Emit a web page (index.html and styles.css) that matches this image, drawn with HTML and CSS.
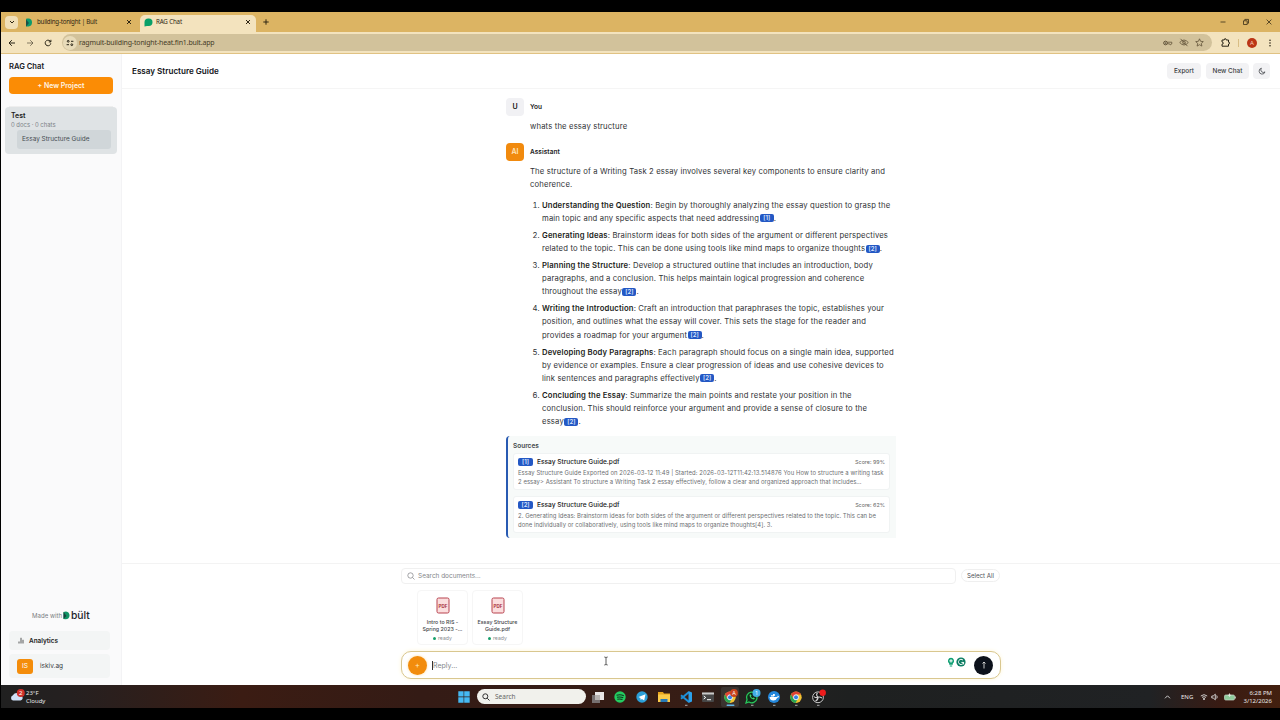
FILE: index.html
```html
<!DOCTYPE html>
<html lang="en">
<head>
<meta charset="utf-8">
<title>RAG Chat</title>
<link rel="stylesheet" href="styles.css">
</head>
<body>
<div class="screen">
  <div class="tabstrip">
    <div class="tab-menu"><svg width="6" height="6" viewBox="0 0 6 6"><path d="M1 2l2 2 2-2" class="ln"/></svg></div>
    <div class="tab">
      <svg class="fav" width="9" height="9" viewBox="0 0 9 9"><path d="M1 1.500Q1 .5 2 .5h2Q7 1 7 4.500T3.500 8.500H1z" fill="#0c9a6c"/><path d="M1 1.500V8.500L4 5z" fill="#1b5049"/></svg>
      <span class="tab-title t1">building-tonight | Bult</span>
      <svg class="x" width="6" height="6" viewBox="0 0 6 6"><path d="M1 1l4 4M5 1l-4 4" class="ln"/></svg>
    </div>
    <div class="tab active">
      <svg class="fav" width="9" height="9" viewBox="0 0 9 9"><path d="M.5 8.500V4A3.700 3.700 0 0 1 4.200.5h.6a3.700 3.700 0 0 1 0 7.400H3z" fill="#08a068"/></svg>
      <span class="tab-title t2">RAG Chat</span>
      <svg class="x" width="6" height="6" viewBox="0 0 6 6"><path d="M1 1l4 4M5 1l-4 4" class="ln"/></svg>
    </div>
    <svg class="plus" width="6" height="6" viewBox="0 0 6 6"><path d="M3 .3v5.400M.3 3h5.400" class="ln"/></svg>
    <div class="winctl">
      <svg width="8" height="8" viewBox="0 0 8 8"><path d="M1.500 4h5" class="ln thin"/></svg>
      <svg width="8" height="8" viewBox="0 0 8 8"><path d="M1.500 2.800h3.700v3.700H1.500zM2.800 2.600V1.400h3.700v3.800H5.400" class="ln thin"/></svg>
      <svg width="8" height="8" viewBox="0 0 8 8"><path d="M1.600 1.600l4.800 4.800M6.400 1.600L1.600 6.400" class="ln thin"/></svg>
    </div>
  </div>
  <div class="toolbar">
    <div class="nav">
      <svg width="8" height="8" viewBox="0 0 8 8"><path d="M7 4H1.200M3.800 1.200L1 4l2.800 2.800" class="ln"/></svg>
      <svg width="8" height="8" viewBox="0 0 8 8"><path d="M1 4h5.800M4.200 1.200L7 4 4.200 6.800" class="ln faded"/></svg>
      <svg width="8" height="8" viewBox="0 0 8 8"><path d="M6.800 4.300A2.800 2.800 0 1 1 6 2l.8.8M6.900.8v2.100H4.800" class="ln"/></svg>
    </div>
    <div class="omnibox">
      <span class="site"><svg width="8" height="8" viewBox="0 0 8 8"><path d="M5 2.300h2.400M.6 5.700h2.400" class="ln"/><circle cx="2.200" cy="2.300" r=".9" class="ln"/><circle cx="5.800" cy="5.700" r=".9" class="ln"/></svg></span>
      <span class="url">ragmult-building-tonight-heat.fin1.bult.app</span>
      <div class="omni-icons">
        <svg width="10" height="8" viewBox="0 0 10 8"><circle cx="2.500" cy="4" r="1.800" class="ln"/><circle cx="2.500" cy="4" r=".5"/><path d="M4.300 3.200h4.500v1.600h-.5a.9.9 0 0 1-1.800 0H4.200" class="ln thin"/></svg>
        <svg width="10" height="9" viewBox="0 0 10 9"><path d="M.7 4.500Q5-.5 9.300 4.500Q5 9.500.7 4.500zM1.500.8l7 7.400" class="ln thin"/><circle cx="5" cy="4.500" r="1.400" class="ln thin"/></svg>
        <svg width="9" height="9" viewBox="0 0 9 9"><path d="M4.500.8l1.100 2.500 2.700.3-2 1.800.6 2.700-2.400-1.400-2.400 1.400.6-2.700-2-1.800 2.700-.3z" class="ln thin"/></svg>
      </div>
    </div>
    <svg class="ext" width="9" height="9" viewBox="0 0 9 9"><path d="M1 2h2.200q0-1.400 1-1.400T5.200 2h2.300v2.200q1.200 0 1.200.9t-1.200.9v2.200H1V6.200q1.300 0 1.300-1.100T1 4z" class="ln"/></svg>
    <i class="sep"></i>
    <span class="profile">A</span>
    <svg class="dots" width="4" height="8" viewBox="0 0 4 8"><circle cx="2" cy="1.200" r=".8"/><circle cx="2" cy="4" r=".8"/><circle cx="2" cy="6.800" r=".8"/></svg>
  </div>

  <div class="app">
    <aside class="sidebar">
      <div class="brand">RAG Chat</div>
      <div class="new-project">+ New Project</div>
      <div class="project">
        <div class="project-name">Test</div>
        <div class="project-meta">0 docs · 0 chats</div>
        <div class="project-chat">Essay Structure Guide</div>
      </div>
      <div class="made">Made with
        <svg width="7" height="9" viewBox="0 0 7 9"><path d="M.5 1l2.500-.5Q6.500 1 6.500 4.500T2.500 8.300L.5 8z" fill="#109466"/><path d="M.5 1v7L3.500 5z" fill="#17443f"/></svg>
        <b>bült</b></div>
      <div class="analytics"><svg width="6" height="7" viewBox="0 0 6 7"><path d="M1 4.500v2M3 .8v5.700M5 2.800v3.700" class="ln thin"/></svg>Analytics</div>
      <div class="user"><span>IS</span>iskiv.ag</div>
    </aside>

    <main class="main">
      <header class="header">
        <h1>Essay Structure Guide</h1>
        <div class="btn export">Export</div>
        <div class="btn newchat">New Chat</div>
        <div class="btn moon"><svg width="8" height="8" viewBox="0 0 8 8"><path d="M3.400 1.200A3 3 0 1 0 7 4.900 2.600 2.600 0 0 1 3.400 1.200z" class="ln thin"/></svg></div>
      </header>

      <section class="chat">
        <div class="msg">
          <span class="avatar you">U</span>
          <div class="body"><div class="who">You</div><p class="first">whats the essay structure</p></div>
        </div>
        <div class="msg ai">
          <span class="avatar bot">AI</span>
          <div class="body">
            <div class="who">Assistant</div>
            <p>The structure of a Writing Task 2 essay involves several key components to ensure clarity and<br>coherence.</p>
            <ol>
              <li><b>Understanding the Question</b>: Begin by thoroughly analyzing the essay question to grasp the<br>main topic and any specific aspects that need addressing<a>[1]</a>.</li>
              <li><b>Generating Ideas</b>: Brainstorm ideas for both sides of the argument or different perspectives<br>related to the topic. This can be done using tools like mind maps to organize thoughts<a>[2]</a>.</li>
              <li><b>Planning the Structure</b>: Develop a structured outline that includes an introduction, body<br>paragraphs, and a conclusion. This helps maintain logical progression and coherence<br>throughout the essay<a>[2]</a>.</li>
              <li><b>Writing the Introduction</b>: Craft an introduction that paraphrases the topic, establishes your<br>position, and outlines what the essay will cover. This sets the stage for the reader and<br>provides a roadmap for your argument<a>[2]</a>.</li>
              <li><b>Developing Body Paragraphs</b>: Each paragraph should focus on a single main idea, supported<br>by evidence or examples. Ensure a clear progression of ideas and use cohesive devices to<br>link sentences and paragraphs effectively<a>[2]</a>.</li>
              <li><b>Concluding the Essay</b>: Summarize the main points and restate your position in the<br>conclusion. This should reinforce your argument and provide a sense of closure to the<br>essay<a>[2]</a>.</li>
            </ol>
          </div>
        </div>
        <div class="sources">
          <div class="sources-title">Sources</div>
          <div class="source">
            <div class="source-head"><a>[1]</a><span>Essay Structure Guide.pdf</span><em>Score: 99%</em></div>
            <div class="snippet">Essay Structure Guide Exported on 2026-03-12 11:49 | Started: 2026-03-12T11:42:13.514876 You How to structure a writing task<br>2 essay&gt; Assistant To structure a Writing Task 2 essay effectively, follow a clear and organized approach that includes...</div>
          </div>
          <div class="source">
            <div class="source-head"><a>[2]</a><span>Essay Structure Guide.pdf</span><em>Score: 62%</em></div>
            <div class="snippet second">2. Generating Ideas: Brainstorm ideas for both sides of the argument or different perspectives related to the topic. This can be<br>done individually or collaboratively, using tools like mind maps to organize thoughts[4]. 3.</div>
          </div>
        </div>
      </section>

      <footer class="dock">
        <div class="column">
          <div class="search-row">
            <div class="doc-search"><svg width="8" height="8" viewBox="0 0 8 8"><circle cx="3.500" cy="3.500" r="2.700" class="ln thin"/><path d="M5.500 5.500l2 2" class="ln thin"/></svg>Search documents...</div>
            <div class="select-all">Select All</div>
          </div>
          <div class="docs">
            <div class="doc"><svg width="14" height="17" viewBox="0 0 14 17"><rect x="1" y="1" width="12" height="15" rx="1.500" fill="#fbdede" stroke="#b8434f"/><text x="7" y="11" text-anchor="middle" class="pdf">PDF</text></svg><span>Intro to RIS -<br>Spring 2023 -...</span><small><i></i>ready</small></div>
            <div class="doc"><svg width="14" height="17" viewBox="0 0 14 17"><rect x="1" y="1" width="12" height="15" rx="1.500" fill="#fbdede" stroke="#b8434f"/><text x="7" y="11" text-anchor="middle" class="pdf">PDF</text></svg><span>Essay Structure<br>Guide.pdf</span><small><i></i>ready</small></div>
          </div>
          <div class="composer">
            <div class="attach">+</div>
            <i class="caret"></i>
            <span class="placeholder">Reply...</span>
            <div class="grammar">
              <svg width="8" height="10" viewBox="0 0 8 10"><path d="M4 .8a3.100 3.100 0 0 0-1.800 5.600v1.400h3.600V6.400A3.100 3.100 0 0 0 4 .8z" fill="#0d9f72"/><path d="M4 2.200v3.400M2.300 3.900h3.400" stroke="#fff"/><path d="M2.800 9h2.400" stroke="#0d9f72"/></svg>
              <svg width="10" height="10" viewBox="0 0 10 10"><circle cx="5" cy="5" r="4.600" fill="#0b7c62"/><path d="M7 3.200A2.600 2.600 0 1 0 7.600 5.400H5.400M7.600 5.400v2" fill="none" stroke="#fff" stroke-width="1"/></svg>
            </div>
            <div class="send"><svg width="8" height="10" viewBox="0 0 8 10"><path d="M4 8.500V2M2.500 3.500L4 2l1.500 1.500" fill="none" stroke="#ddd" stroke-width=".9"/></svg></div>
            <svg class="ibeam" width="6" height="10" viewBox="0 0 6 10"><path d="M1.300 1Q3 1 3 2Q3 1 4.700 1M3 2v6M1.300 9Q3 9 3 8Q3 9 4.700 9" fill="none" stroke="#333" stroke-width=".8"/></svg>
          </div>
        </div>
      </footer>
    </main>
  </div>

  <div class="taskbar">
    <div class="weather">
      <svg width="15" height="13" viewBox="0 0 15 13"><path d="M3 11.500a2.700 2.700 0 0 1 0-5.200A3.500 3.500 0 0 1 9.500 6 2.800 2.800 0 0 1 10.500 11.500z" fill="#cfe0f8"/><circle cx="10.800" cy="4" r="4" fill="#cf2f2a"/><text x="10.800" y="6.300" text-anchor="middle" class="badge">2</text></svg>
      <div>23°F<br>Cloudy</div>
    </div>
    <div class="apps">
      <svg width="12" height="12" viewBox="0 0 12 12"><path d="M.3.3h5.300v5.300H.3zM6.200.3h5.500v5.300H6.200zM.3 6.200h5.300v5.500H.3zM6.200 6.200h5.500v5.500H6.200z" fill="#45b9f2"/></svg>
      <div class="tb-search"><svg width="8" height="8" viewBox="0 0 8 8"><circle cx="3.300" cy="3.300" r="2.500" class="ln"/><path d="M5.200 5.200l2.300 2.300" class="ln"/></svg><span>Search</span></div>
      <div class="icons">
        <svg viewBox="0 0 22 22"><path d="M5 9h8v8H5z" fill="#777070"/><path d="M8 6h9v8H8z" fill="#e9e6e5"/><path d="M8 9h5v5H8z" fill="#b7b2b0"/></svg>
        <svg viewBox="0 0 22 22"><circle cx="11" cy="11" r="5.700" fill="#23cc60"/><path d="M7.500 9.300q4-1.200 7.300.5M8 11.300q3.500-.9 6.200.5M8.300 13.200q3-.7 5.200.4" fill="none" stroke="#12371f" stroke-width="1.100"/></svg>
        <svg viewBox="0 0 22 22"><circle cx="11" cy="11" r="5.700" fill="#2b9fd8"/><path d="M7.500 11l7-2.800-1.300 6.300-2.300-1.600-1.200 1.200-.3-2.200z" fill="#fff"/></svg>
        <svg viewBox="0 0 22 22"><path d="M5 6h5l1 1.500h6V16H5z" fill="#e9a51c"/><path d="M5 8.500h12V16H5z" fill="#fccb4a"/><path d="M7.500 13h7v3h-7z" fill="#2779b6"/></svg>
        <svg viewBox="0 0 22 22"><path d="M14 6L6 12.800M14 16L6 9.200" fill="none" stroke="#1e8fd8" stroke-width="2"/><path d="M13.500 5l3.500 1.500v9L13.500 17z" fill="#2ba1ec"/><rect x="10" y="18.800" width="2.500" height="1" fill="#aaa"/></svg>
        <svg viewBox="0 0 22 22"><rect x="5" y="6.500" width="12" height="9.500" rx="1" fill="#474747"/><path d="M5 6.500h12v2H5z" fill="#cacaca"/><path d="M6.700 10l2 1.500-2 1.500M10 13.700h4" fill="none" stroke="#fff"/></svg>
        <svg viewBox="0 0 22 22"><rect x="2" y="1" width="18" height="20" rx="2" fill="#3a332f"/><circle cx="11" cy="11.300" r="5.700" fill="#f3c331"/><path d="M6 8.500a5.700 5.700 0 0 1 10 0h-5L8.500 13z" fill="#df4334"/><path d="M6 8.500a5.700 5.700 0 0 0 4.500 8.500L13 12.500l-4.500.5z" fill="#27a553"/><circle cx="11" cy="11.300" r="2.500" fill="#367ee0" stroke="#fff" stroke-width=".9"/><circle cx="15" cy="7" r="3.900" fill="#c9431c"/><text x="15" y="9" text-anchor="middle" class="mini">A</text><rect x="7.500" y="18.500" width="8" height="1.500" rx=".7" fill="#63b7e6"/></svg>
        <svg viewBox="0 0 22 22"><path d="M5 17l1-3.200a5.300 5.300 0 1 1 2 2.200z" fill="#102d19" stroke="#28c65a" stroke-width="1.300"/><path d="M8.500 9q.3 3.700 4.500 4.500l1-1.300-1.700-.8-.8.8-1.700-1.700.7-.8-.8-1.500z" fill="#3ed36b"/><circle cx="15.500" cy="7" r="4" fill="#42aee7"/><text x="15.500" y="9.200" text-anchor="middle" class="mini">1</text><rect x="10" y="18.800" width="2.500" height="1" fill="#aaa"/></svg>
        <svg viewBox="0 0 22 22"><circle cx="11" cy="11" r="6" fill="#2488dc"/><path d="M6.500 11h7q1.300 0 1.300-1.500l1.200 1q-.5 1.300-1.700 1.300-1 2.700-4 2.700-3.300 0-3.800-3.500zM8 9.300h3v1.300H8zM10 7.900h1.800v2H10z" fill="#fff"/><rect x="10" y="18.800" width="2.500" height="1" fill="#aaa"/></svg>
        <svg viewBox="0 0 22 22"><circle cx="11" cy="11.300" r="5.700" fill="#f3c331"/><path d="M6 8.500a5.700 5.700 0 0 1 10 0h-5L8.500 13z" fill="#df4334"/><path d="M6 8.500a5.700 5.700 0 0 0 4.500 8.500L13 12.500l-4.500.5z" fill="#27a553"/><circle cx="11" cy="11.300" r="2.500" fill="#367ee0" stroke="#fff" stroke-width=".9"/><rect x="10" y="18.800" width="2.500" height="1" fill="#aaa"/></svg>
        <svg viewBox="0 0 22 22"><circle cx="11" cy="11.300" r="5.400" fill="#161616" stroke="#c8c8c8"/><path d="M10.500 7q-2 2 .5 4.200M15 12q-2.500-1.500-4-.8M8.500 15q2.500-.8 2.500-3.800M7 10.500q1.500 2 4 .7" fill="none" stroke="#d0d0d0" stroke-width="1.200"/><circle cx="15.700" cy="6.700" r="3.200" fill="#ee1c1c"/><rect x="10" y="18.800" width="2.500" height="1" fill="#aaa"/></svg>
      </div>
    </div>
    <div class="tray">
      <svg width="7" height="6" viewBox="0 0 7 6"><path d="M1 4.300l2.500-2.500L6 4.300" class="wh"/></svg>
      <span class="lang">ENG</span>
      <svg width="8" height="8" viewBox="0 0 8 8"><path d="M.8 3q3.200-2.700 6.400 0M2 4.400q2-1.500 4 0" class="wh"/><circle cx="4" cy="6" r="1" fill="#ddd"/></svg>
      <svg width="8" height="8" viewBox="0 0 8 8"><path d="M.8 3h1.400L4.300 1.200v5.600L2.200 5H.8zM5.700 2.500q1 1.500 0 3" class="wh"/></svg>
      <svg class="bat" width="12" height="8" viewBox="0 0 12 8"><rect x=".5" y="2" width="10" height="5" rx="1.200" fill="#8fcb9b" stroke="#c9d8ca" stroke-width=".7"/><path d="M11.300 3.500v2M5.500.5v3.300M3.800 2.200h3.400" stroke="#e5eee5" stroke-width=".9"/></svg>
      <div class="clock">6:28 PM<br>3/12/2026</div>
    </div>
  </div>
</div>
</body>
</html>
```
FILE: styles.css
```css
* { box-sizing: border-box; }
body { margin: 0; width: 1280px; height: 720px; padding: 12px 0 12px 1px; background: #000; overflow: hidden; font-family: Inter, "Liberation Sans", sans-serif; color: #222; }
svg { display: block; flex: none; }
.ln { fill: none; stroke: currentColor; stroke-width: 1; }
.thin { stroke-width: .75; }
.faded { opacity: .55; }
.wh { fill: none; stroke: #ddd; stroke-width: .9; }
.screen { display: flex; flex-direction: column; height: 696px; background: #fff; }

.tabstrip { display: flex; align-items: center; height: 20px; background: #dcb463; color: #2f2613; font-family: "Noto Sans", sans-serif; }
.tab-menu { display: grid; place-items: center; width: 13px; height: 13px; margin: 0 7px 0 4px; border-radius: 4px; background: #f0dfb7; }
.tab { display: flex; align-items: center; width: 115px; height: 17px; margin-top: 3px; padding: 0 8px 3px 0; }
.tab .fav { margin-right: 3px; }
.tab-title { font-size: 6.200px; line-height: 10px; white-space: nowrap; }
.t1 { letter-spacing: -.24px; }
.t2 { letter-spacing: -.16px; }
.tab .x { margin-left: auto; }
.tab.active { width: 116px; padding: 0 5px 3px 4px; border-radius: 5px 5px 0 0; background: #f3e3be; }
.plus { margin-left: 7px; }
.winctl { display: flex; gap: 15px; margin: 0 7px 0 auto; }
.toolbar { display: flex; align-items: center; height: 22px; background: #f3e3be; border-bottom: 1px solid #e0c283; color: #292416; }
.nav { display: flex; gap: 10px; margin-left: 7px; }
.omnibox { display: flex; align-items: center; width: 1150px; height: 17px; margin-left: 10px; border-radius: 9px; background: #d2c29b; }
.site { display: grid; place-items: center; width: 14px; height: 14px; margin: 0 2px 0 1px; border-radius: 50%; background: #e8dbb9; }
.url { font: 7px/12px "Noto Sans", sans-serif; letter-spacing: -.16px; color: #453b27; }
.omni-icons { display: flex; align-items: center; gap: 6px; margin: 0 8px 0 auto; color: #5c4e34; }
.ext { margin: 0 0 0 9px; }
.sep { width: 1px; height: 8px; margin-left: 8px; background: #d8bd84; }
.profile { width: 10px; height: 10px; margin-left: 8px; border-radius: 50%; background: #bb3516; color: #f5cdbf; font: 6px/10px "Noto Sans", sans-serif; text-align: center; }
.dots { margin-left: 11px; fill: currentColor; }

.app { display: flex; height: 631px; }
.sidebar { display: flex; flex-direction: column; width: 121px; background: #fafafb; border-right: 1px solid #f3f3f5; }
.brand { margin: 8px 0 0 8px; font-size: 7.600px; line-height: 10px; font-weight: 600; color: #16181d; }
.new-project { width: 104px; height: 17px; margin: 5px 0 0 8px; border-radius: 4px; background: #fb8c05; color: #fff5e5; font-size: 6.950px; line-height: 17px; font-weight: 600; text-align: center; }
.project { width: 112px; height: 47px; margin: 13px 0 0 4px; padding: 4px 6px; border-radius: 4px; background: #dfe3e5; box-shadow: 0 -5px 0 -4px #eee; }
.project-name { font-size: 7px; line-height: 10px; font-weight: 600; }
.project-meta { font-size: 5.900px; line-height: 8px; color: #7c8287; }
.project-chat { width: 94px; height: 19px; margin: 1px 0 0 6px; padding-left: 5px; border-radius: 3px; background: #d0d6d9; font-size: 6.450px; line-height: 19.500px; color: #454c51; }
.made { display: flex; align-items: center; gap: 2px; height: 12px; margin: auto 0 10px 31px; font-size: 6.100px; color: #7b7d82; }
.made svg { margin-left: -1px; }
.made b { margin-left: -1px; font: 500 10.300px/12px Inter, sans-serif; letter-spacing: 0; color: #20222a; }
.analytics, .user { display: flex; align-items: center; width: 101px; margin-left: 8px; border-radius: 4px; background: #f3f5f5; font-size: 6.400px; }
.analytics { height: 19px; gap: 5px; padding-left: 9px; font-weight: 600; }
.user { height: 24px; margin-top: 4px; margin-bottom: 7px; gap: 7px; padding-left: 8px; font-size: 6.500px; color: #393c42; }
.user span { width: 16px; height: 15px; border-radius: 3px; background: #f48d0b; color: #fff; font-size: 6.500px; line-height: 15px; text-align: center; }

.main { display: flex; flex-direction: column; width: 1158px; background: #fff; }
.header { display: flex; align-items: center; height: 35px; padding: 0 10px; border-bottom: 1px solid #f5f5f5; }
.header h1 { margin: 0 auto 0 0; font-size: 8.100px; line-height: 12px; font-weight: 600; color: #111318; }
.btn { height: 16px; border-radius: 4px; background: #f2f2f4; font-size: 6.400px; line-height: 16px; font-weight: 500; text-align: center; color: #3a3c41; }
.export { width: 34px; }
.newchat { width: 43px; margin-left: 5px; }
.moon { display: grid; place-items: center; width: 17px; margin-left: 4px; }

.chat { width: 390px; height: 474px; margin-left: 384px; padding-top: 9px; }
.msg { display: flex; gap: 6px; }
.msg.ai { margin-top: 10px; }
.avatar { flex: none; width: 18px; height: 18px; border-radius: 4px; font-size: 7px; line-height: 18px; font-weight: 600; text-align: center; }
.you { background: #f1f1f4; color: #111; }
.bot { background: #f18a0e; color: #ffe5bd; }
.who { font-size: 6.500px; line-height: 18px; font-weight: 600; letter-spacing: .05px; }
.body p, .body ol { margin: 3.500px 0 0; padding: 0; font-size: 7.700px; line-height: 13.150px; letter-spacing: .15px; white-space: nowrap; color: #303235; }
.body p.first { margin-bottom: .5px; }
.body ol { margin-top: 7.800px; padding-left: 12px; }
.body li { margin-bottom: 3.800px; }
.body li b { font-weight: 600; color: #1b1d20; }
.body a, .source a { display: inline-block; height: 8px; border-radius: 2px; background: #2458c4; color: #dce7ff; font-size: 6px; line-height: 8px; font-weight: 600; text-align: center; letter-spacing: 0; }
.body a { width: 14px; margin-left: .5px; vertical-align: .5px; }
.sources { height: 102px; margin-top: 4px; padding: 5px 6px 0 5px; border-left: 2px solid #285ab2; border-radius: 4px 0 0 4px; background: #f7faf9; }
.sources-title { font-size: 6.500px; line-height: 10px; font-weight: 600; color: #43474a; }
.source { height: 37px; margin: 2px 0 6px; padding: 3px 4px; border: 1px solid #f0f3f3; border-radius: 3px; background: #fff; white-space: nowrap; }
.source-head { display: flex; align-items: center; height: 10px; gap: 4px; font-size: 6.600px; font-weight: 500; }
.source-head a { width: 15px; }
.source-head em { margin-left: auto; font-size: 5.400px; font-weight: 400; font-style: normal; color: #666; }
.snippet { margin-top: 1px; font-size: 5.900px; line-height: 9px; letter-spacing: .075px; color: #6b6e71; }
.snippet.second { letter-spacing: .06px; }

.dock { height: 122px; padding: 4px 0 0 279px; border-top: 1px solid #f3f3f3; }
.column { width: 600px; }
.search-row { display: flex; gap: 5px; height: 16px; }
.doc-search { display: flex; align-items: center; gap: 3px; width: 555px; padding-left: 5px; border: 1px solid #f0f0f0; border-radius: 4px; font-size: 6.450px; color: #85878b; }
.select-all { width: 39px; height: 13px; margin-top: 1px; border: 1px solid #efefef; border-radius: 7px; font-size: 6.100px; line-height: 11px; text-align: center; color: #505359; }
.docs { display: flex; gap: 4px; margin: 6px 0 0 16px; }
.doc { display: flex; flex-direction: column; align-items: center; width: 51px; height: 55px; padding-top: 6px; border: 1px solid #f6f6f6; border-radius: 4px; text-align: center; font-size: 5.300px; line-height: 6.500px; white-space: nowrap; color: #45474c; }
.doc span { margin-top: 5px; font-weight: 500; }
.doc small { display: flex; align-items: center; gap: 2px; margin-top: 3px; font-size: 5.200px; color: #8a8d90; }
.doc i { width: 3px; height: 3px; border-radius: 50%; background: #16a06b; }
.pdf { font: 700 4.500px Inter, sans-serif; fill: #a82e3c; }
.composer { position: relative; display: flex; align-items: center; height: 28px; margin-top: 6px; padding: 0 7px 0 6px; border: 1px solid #d9c78f; border-radius: 10px; background: #fff; box-shadow: 0 0 4px #fff5d8; }
.attach { width: 19px; height: 19px; border-radius: 50%; background: #f28c0c; color: #ffe8bf; font-size: 8px; line-height: 18px; text-align: center; box-shadow: 0 0 3px #ffdc9b; }
.caret { width: 1px; height: 9px; margin-left: 5px; background: #333; }
.placeholder { font-size: 7px; color: #85878b; }
.grammar { display: flex; align-items: center; gap: 1px; margin: -6px 8px 0 auto; }
.send { display: grid; place-items: center; width: 19px; height: 19px; border-radius: 50%; background: #0c111b; }
.ibeam { position: absolute; left: 201px; top: 4px; }

.taskbar { position: relative; display: flex; align-items: center; height: 23px; background: linear-gradient(90deg, #202020 0, #252020 70px, #3b1c13 240px, #341b15 420px, #371d15 700px, #252220 735px, #1e2020 850px, #202224 1150px, #391b13 1220px, #43200f 1280px); color: #e8e8e8; font: 6px/8px "Noto Sans", sans-serif; }
.weather { display: flex; gap: 1px; width: 457px; padding-left: 9px; }
.badge { font: 6px "Noto Sans", sans-serif; fill: #fff; }
.mini { font: 5.500px "Noto Sans", sans-serif; fill: #fff; }
.apps { display: flex; align-items: center; }
.tb-search { display: flex; align-items: center; gap: 5px; width: 109px; height: 15px; margin-left: 7px; padding-left: 5px; border-radius: 8px; background: #f1f1ec; color: #333; font-size: 6.500px; }
.tb-search span { color: #666; }
.icons { display: flex; margin-left: 1px; }
.icons svg { width: 22px; height: 22px; }
.tray { display: flex; align-items: center; margin: 0 8px 0 auto; }
.lang { width: 16px; margin: 0 3px 0 10px; font-size: 6px; }
.tray svg + svg { margin-left: 3px; }
.tray .bat { margin-left: 5px; }
.clock { width: 36px; text-align: right; }
```
